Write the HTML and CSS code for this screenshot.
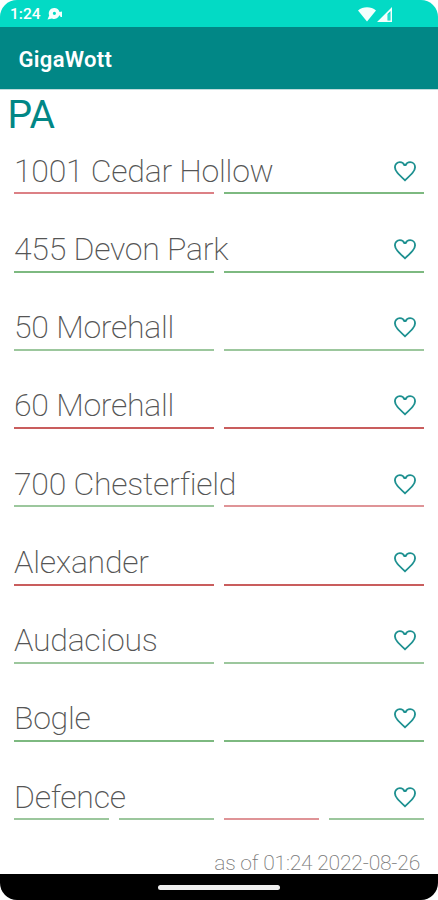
FILE: index.html
```html
<!DOCTYPE html>
<html lang="en">
<head>
<meta charset="utf-8">
<title>GigaWott</title>
<link rel="stylesheet" href="styles.css">
</head>
<body>
<svg class="defs" width="0" height="0" aria-hidden="true"><symbol id="heart" viewBox="0 0 24 24"><path d="M12 20.600C6 15 2.700 12 2.700 8.500 2.700 5.900 4.700 3.800 7.300 3.800c1.900 0 3.400.9 4.100 2.700h1.200c.7-1.800 2.200-2.700 4.100-2.700 2.600 0 4.600 2.100 4.600 4.700 0 3.500-3.300 6.500-9.300 12.100z"/></symbol></svg>
<div class="phone">
  <div class="status">
    <span class="clock">1:24</span>
    <svg class="note" viewBox="0 0 16 12"><path fill-rule="evenodd" d="M7.3 0a5.4 5.4 0 0 1 5.2 4L15 3.400V9h-1.500L13 7.500h-.7A5.400 5.400 0 0 1 5 10.500L.5 11.600 2.200 7.500A5.400 5.400 0 0 1 7.300 0zM7.400 3.700a1.600 1.600 0 1 0 0 3.200 1.600 1.600 0 0 0 0-3.200z"/></svg>
    <svg class="wifi" viewBox="0 0 18 15"><path d="M0 3.500C5 -.8 13 -.8 18 3.500L9 14.500z"/></svg>
    <svg class="signal" viewBox="0 0 15 15"><path fill-rule="evenodd" d="M15 0v15H0zM13.500 4 10.500 7v6.500h3z"/><path d="M11.500 7h1v6h-1z" opacity=".3"/></svg>
  </div>
  <header class="appbar">GigaWott</header>
  <main class="content">
    <h1 class="region">PA</h1>
    <ul class="list">
      <li class="row"><div class="head"><span>1001 Cedar Hollow</span><svg class="heart"><use href="#heart"/></svg></div><div class="bars"><i class="r2"></i><i class="g2"></i></div></li>
      <li class="row"><div class="head"><span>455 Devon Park</span><svg class="heart"><use href="#heart"/></svg></div><div class="bars"><i class="g2"></i><i class="g2"></i></div></li>
      <li class="row"><div class="head"><span>50 Morehall</span><svg class="heart"><use href="#heart"/></svg></div><div class="bars"><i class="g1"></i><i class="g1"></i></div></li>
      <li class="row"><div class="head"><span>60 Morehall</span><svg class="heart"><use href="#heart"/></svg></div><div class="bars"><i class="r3"></i><i class="r3"></i></div></li>
      <li class="row"><div class="head"><span>700 Chesterfield</span><svg class="heart"><use href="#heart"/></svg></div><div class="bars"><i class="g1"></i><i class="r1"></i></div></li>
      <li class="row"><div class="head"><span>Alexander</span><svg class="heart"><use href="#heart"/></svg></div><div class="bars"><i class="r3"></i><i class="r3"></i></div></li>
      <li class="row"><div class="head"><span>Audacious</span><svg class="heart"><use href="#heart"/></svg></div><div class="bars"><i class="g1"></i><i class="g1"></i></div></li>
      <li class="row"><div class="head"><span>Bogle</span><svg class="heart"><use href="#heart"/></svg></div><div class="bars"><i class="g2"></i><i class="g2"></i></div></li>
      <li class="row"><div class="head"><span>Defence</span><svg class="heart"><use href="#heart"/></svg></div><div class="bars"><i class="g1"></i><i class="g1"></i><i class="r1"></i><i class="g1"></i></div></li>
    </ul>
    <p class="asof">as of 01:24 2022-08-26</p>
  </main>
  <nav class="navbar"><span class="pill"></span></nav>
</div>
</body>
</html>
```

FILE: styles.css
```css
* { box-sizing: border-box; }
body { margin: 0; background: #fff; font-family: Roboto, sans-serif; }
.defs { display: block; }
.phone {
  width: 438px;
  height: 900px;
  display: flex;
  flex-direction: column;
  overflow: hidden;
  border-radius: 17px;
  background: #fff;
}
.status {
  flex: none;
  height: 27px;
  display: flex;
  align-items: center;
  padding: 1px 46px 0 10px;
  background: #03dac5;
  color: #fff;
}
.status svg { fill: #f4fffd; }
.clock { font-size: 15.500px; font-weight: 500; width: 37px; line-height: 20px; }
.note { width: 16px; height: 12px; }
.wifi { width: 18px; height: 15px; margin-left: auto; }
.signal { width: 15px; height: 15px; margin-left: 1px; }
.appbar {
  flex: none;
  height: 63px;
  padding-left: 18.500px;
  line-height: 66px;
  background: #018786;
  border-bottom: 1px solid #bfdcdc;
  color: #fff;
  font-size: 22px;
  font-weight: 600;
  letter-spacing: 0.3px;
}
.content { flex: 1; min-height: 0; }
.region {
  margin: 0;
  padding: 0 0 0 7.500px;
  height: 54px;
  line-height: 50px;
  color: #018786;
  font-size: 39px;
  font-weight: 400;
}
.list { margin: 0; padding: 0 14px; list-style: none; }
.row { height: 78.250px; }
.head {
  height: 48.300px;
  display: flex;
  align-items: center;
  justify-content: space-between;
  padding: 5px 6px 0 0;
  color: #555;
  font-size: 32px;
  font-weight: 200;
  letter-spacing: -0.270px;
  white-space: nowrap;
}
.heart { width: 26px; height: 26px; fill: none; stroke: #1d9090; stroke-width: 1.700; }
.bars { display: flex; gap: 10px; }
.bars i { flex: 1; height: 2px; }
.g1 { background: #9cc79d; }
.g2 { background: #7db980; }
.r1 { background: #df9497; }
.r2 { background: #dc8085; }
.r3 { background: #c95d5d; }
.asof {
  margin: 0;
  padding-right: 18px;
  line-height: 30px;
  text-align: right;
  color: #777;
  font-size: 21px;
  font-weight: 200;
  letter-spacing: -0.2px;
}
.navbar {
  flex: none;
  height: 26px;
  display: flex;
  align-items: center;
  justify-content: center;
  background: #000;
}
.pill { width: 122px; height: 5px; border-radius: 3px; background: #eee; }
```
